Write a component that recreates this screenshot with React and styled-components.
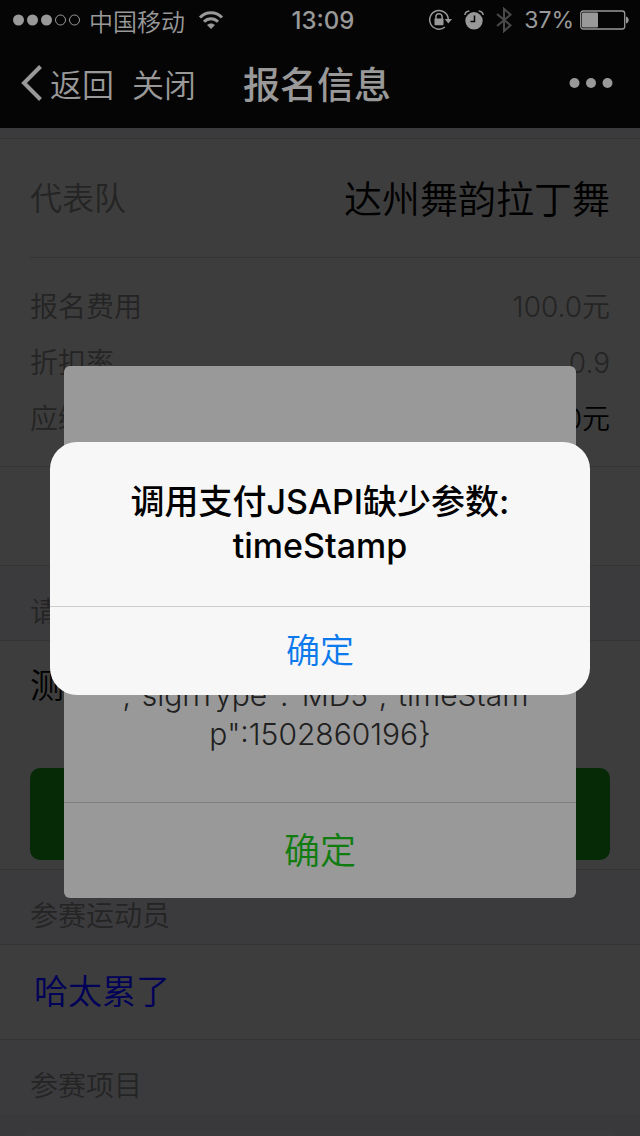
import React from "react";
import styled, { createGlobalStyle } from "styled-components";

const GlobalStyle = createGlobalStyle`
    * {
        box-sizing: border-box;
    }
    body {
        margin: 0;
        background-color: #39393b;
        font-family: Inter, "Noto Sans CJK SC", sans-serif;
        font-weight: 350;
    }
    button {
        font: inherit;
        color: inherit;
        border: none;
        padding: 0;
        background: none;
    }
    h1, h2, p, dl, dt, dd {
        margin: 0;
        font: inherit;
    }
`

const Page = styled.div`
    height: 100vh;
    overflow: hidden;
    display: flex;
    flex-direction: column;
`

const Header = styled.header`
    background-color: #050505;
    color: #999;
`

const StatusBar = styled.div`
    display: grid;
    grid-template-columns: 1fr auto 1fr;
    align-items: center;
    height: 40px;
    padding: 0 11px 0 13px;
    font-size: 24px;
`

const StatusGroup = styled.div`
    display: flex;
    align-items: center;
    justify-content: ${props => props.$end ? "flex-end" : "flex-start"};
    gap: ${props => props.$gap}px;
`

const Carrier = styled.span`
    margin-right: 4px;
`

const Time = styled.span`
    padding-left: 4px;
    font-weight: 500;
`

const Percent = styled.span`
    font-weight: 400;
    font-size: 23px;
`

const NavBar = styled.nav`
    display: grid;
    grid-template-columns: 1fr auto 1fr;
    align-items: center;
    height: 88px;
    padding: 0 27px 2px 21px;
`

const NavLinks = styled.div`
    display: flex;
    gap: 18px;
    font-size: 32px;
`

const NavButton = styled.button`
    display: flex;
    align-items: center;
    gap: 7px;
`

const NavTitle = styled.h1`
    font-size: 37px;
    font-weight: 500;
`

const MoreButton = styled.button`
    display: flex;
    justify-self: end;
`

const Main = styled.main`
    flex: 1;
    padding-top: 10px;
    background-color: #3b3b3d;
    color: #000;
`

const Cells = styled.section`
    background-color: #3d3d3d;
    border-top: 1px solid #343434;
    border-bottom: 1px solid #343434;
`

const TeamRow = styled.dl`
    display: flex;
    align-items: center;
    justify-content: space-between;
    height: 119px;
    margin-left: 30px;
    padding: 0 30px 4px 0;
    border-bottom: 1px solid #343434;
    font-size: 38px;
`

const TeamLabel = styled.dt`
    color: #242424;
    font-size: 32px;
`

const FeeList = styled.dl`
    padding: 21px 30px 19px;
    font-size: 28px;
    line-height: 56px;
    border-bottom: 1px solid #343434;
`

const FeeRow = styled.div`
    display: flex;
    justify-content: space-between;
    color: #242424;
`

const FeeValue = styled.dd`
    color: ${props => props.$strong ? "#000" : "#242424"};
`

const Spacer = styled.div`
    height: 98px;
`

const CellsTitle = styled.h2`
    height: 74px;
    padding: 18px 30px 0;
    color: #242424;
    font-size: 28px;
    line-height: 56px;
`

const FormRow = styled.p`
    height: 90px;
    padding: 0 30px;
    font-size: 34px;
    line-height: 90px;
`

const ButtonArea = styled.div`
    padding: 37px 30px 9px;
`

const SubmitButton = styled.button`
    display: block;
    width: 100%;
    height: 92px;
    border-radius: 10px;
    background-color: #062a06;
`

const AthleteLink = styled.a`
    display: block;
    padding: 0 34px;
    color: #000059;
    font-size: 34px;
    line-height: 94px;
    text-decoration: none;
`

const Footer = styled.div`
    padding: 16px 24px 0;
    background-color: #39393b;
`

const FooterCard = styled.div`
    height: 100px;
    border-radius: 6px;
    background-color: #3b3b3d;
`

const Layer = styled.div`
    position: fixed;
    inset: ${props => props.$top}px 0 0;
    display: flex;
    align-items: center;
    justify-content: center;
`

const Dialog = styled.div`
    width: 80%;
    border-radius: 6px;
    background-color: #999;
    color: #202020;
    text-align: center;
`

const DialogBody = styled.div`
    display: flex;
    align-items: flex-end;
    justify-content: center;
    min-height: 436px;
    padding: 48px;
    font-size: 30px;
    line-height: 39px;
    white-space: nowrap;
`

const DialogButton = styled.button`
    display: block;
    width: 100%;
    height: 96px;
    padding-bottom: 6px;
    border-top: 1px solid #808080;
    color: #107c10;
    font-size: 36px;
`

const Alert = styled.div`
    width: calc(100% - 100px);
    border-radius: 27px;
    background-color: #f7f7f7;
    color: #000;
    text-align: center;
`

const AlertMessage = styled.p`
    padding: 38px 32px;
    font-size: 34px;
    font-weight: 500;
    line-height: 44px;
`

const AlertButton = styled.button`
    display: block;
    width: 100%;
    height: 89px;
    padding-bottom: 4px;
    border-top: 1px solid #cecece;
    color: #0c79ec;
    font-size: 34px;
`

const Signal = () => (
    <svg width="67" height="12" viewBox="0 0 67 12" fill="currentColor">
        {
            [0, 1, 2, 3, 4].map( i => {
                return i < 3
                    ? <circle key={i} cx={5.5 + i * 14} cy="6" r="5.5" />
                    : <circle key={i} cx={5.5 + i * 14} cy="6" r="5" fill="none" stroke="currentColor" />
            })
        }
    </svg>
)

const Wifi = () => (
    <svg width="26" height="20" viewBox="0 0 26 20" fill="none" stroke="currentColor" strokeWidth="3">
        <path d="M2 7.5C8 1.2 18 1.2 24 7.5" />
        <path d="M6 11.8C10 7.8 16 7.8 20 11.8" />
        <path d="M13 19L9 15.1C11 13 15 13 17 15.1Z" fill="currentColor" stroke="none" />
    </svg>
)

const RotationLock = () => (
    <svg width="24" height="22" viewBox="0 0 24 22" fill="none" stroke="currentColor">
        <path d="M16.9 18A9.3 9.3 0 1 1 20.3 10.5" strokeWidth="1.5" />
        <path d="M16.7 10H24L20.3 14.5Z" fill="currentColor" stroke="none" />
        <path d="M7.9 10.5V7.8a3.1 3.1 0 0 1 6.2 0v2.7" strokeWidth="1.5" />
        <rect x="6.5" y="9.5" width="9" height="6.7" rx="0.7" fill="currentColor" stroke="none" />
    </svg>
)

const Alarm = () => (
    <svg width="20" height="20" viewBox="0 0 20 20" fill="none" stroke="currentColor">
        <circle cx="10" cy="10.8" r="8.7" fill="currentColor" stroke="none" />
        <path d="M0.8 5C1.2 2.6 2.8 1.2 5.4 1M19.2 5C18.8 2.6 17.2 1.2 14.6 1" strokeWidth="1.5" />
        <path d="M10.5 5.5V11.5H6.5" stroke="#050505" strokeWidth="1.5" />
    </svg>
)

const Bluetooth = () => (
    <svg width="16" height="26" viewBox="0 0 16 26" fill="none" stroke="#4a4a4a" strokeWidth="2">
        <path d="M1 7L14.5 18.3L8 24.2V1.8L14.5 7.7L1 19" />
    </svg>
)

const Battery = () => (
    <svg width="49" height="20" viewBox="0 0 49 20" fill="currentColor">
        <rect x="0.7" y="1" width="44" height="18" rx="2.5" fill="none" stroke="currentColor" strokeWidth="1.3" />
        <rect x="2" y="2.5" width="16" height="15" rx="1" />
        <path d="M46 6.5C49.6 7.5 49.6 12.5 46 13.5Z" />
    </svg>
)

const BackArrow = () => (
    <svg width="22" height="36" viewBox="0 0 22 36" fill="none" stroke="currentColor" strokeWidth="4">
        <path d="M19.5 1.5L3 18L19.5 34.5" />
    </svg>
)

const More = () => (
    <svg width="44" height="12" viewBox="0 0 44 12" fill="currentColor">
        <circle cx="5.5" cy="6" r="5" />
        <circle cx="22" cy="6" r="5" />
        <circle cx="38.5" cy="6" r="5" />
    </svg>
)

const fees = [
    { label: "报名费用", value: "100.0元" },
    { label: "折扣率", value: "0.9" },
    { label: "应缴费用", value: "90.0元", strong: true },
]

const App = () => {
    return (
        <Page>
            <GlobalStyle />
            <Header>
                <StatusBar>
                    <StatusGroup $gap={9}>
                        <Signal />
                        <Carrier>中国移动</Carrier>
                        <Wifi />
                    </StatusGroup>
                    <Time>13:09</Time>
                    <StatusGroup $end $gap={12}>
                        <RotationLock />
                        <Alarm />
                        <Bluetooth />
                        <StatusGroup $gap={6}>
                            <Percent>37%</Percent>
                            <Battery />
                        </StatusGroup>
                    </StatusGroup>
                </StatusBar>
                <NavBar>
                    <NavLinks>
                        <NavButton><BackArrow />返回</NavButton>
                        <NavButton>关闭</NavButton>
                    </NavLinks>
                    <NavTitle>报名信息</NavTitle>
                    <MoreButton aria-label="更多"><More /></MoreButton>
                </NavBar>
            </Header>

            <Main>
                <Cells>
                    <TeamRow>
                        <TeamLabel>代表队</TeamLabel>
                        <dd>达州舞韵拉丁舞</dd>
                    </TeamRow>
                    <FeeList>
                        {
                            fees.map( ({ label, value, strong }) => {
                                return (
                                    <FeeRow key={label}>
                                        <dt>{label}</dt>
                                        <FeeValue $strong={strong}>{value}</FeeValue>
                                    </FeeRow>
                                )
                            })
                        }
                    </FeeList>
                    <Spacer />
                </Cells>

                <CellsTitle>请</CellsTitle>
                <Cells>
                    <FormRow>测</FormRow>
                    <ButtonArea>
                        <SubmitButton aria-label="提交" />
                    </ButtonArea>
                </Cells>

                <CellsTitle>参赛运动员</CellsTitle>
                <Cells>
                    <AthleteLink href="#athlete">哈太累了</AthleteLink>
                </Cells>

                <CellsTitle>参赛项目</CellsTitle>
                <Footer>
                    <FooterCard />
                </Footer>
            </Main>

            <Layer $top={128}>
                <Dialog role="dialog">
                    <DialogBody>
                        <p>
                            {'","signType":"MD5","timeStam'}<br />
                            {'p":1502860196}'}
                        </p>
                    </DialogBody>
                    <DialogButton>确定</DialogButton>
                </Dialog>
            </Layer>

            <Layer $top={0}>
                <Alert role="alertdialog">
                    <AlertMessage>
                        调用支付JSAPI缺少参数:<br />
                        timeStamp
                    </AlertMessage>
                    <AlertButton>确定</AlertButton>
                </Alert>
            </Layer>
        </Page>
    )
}

export default App;
